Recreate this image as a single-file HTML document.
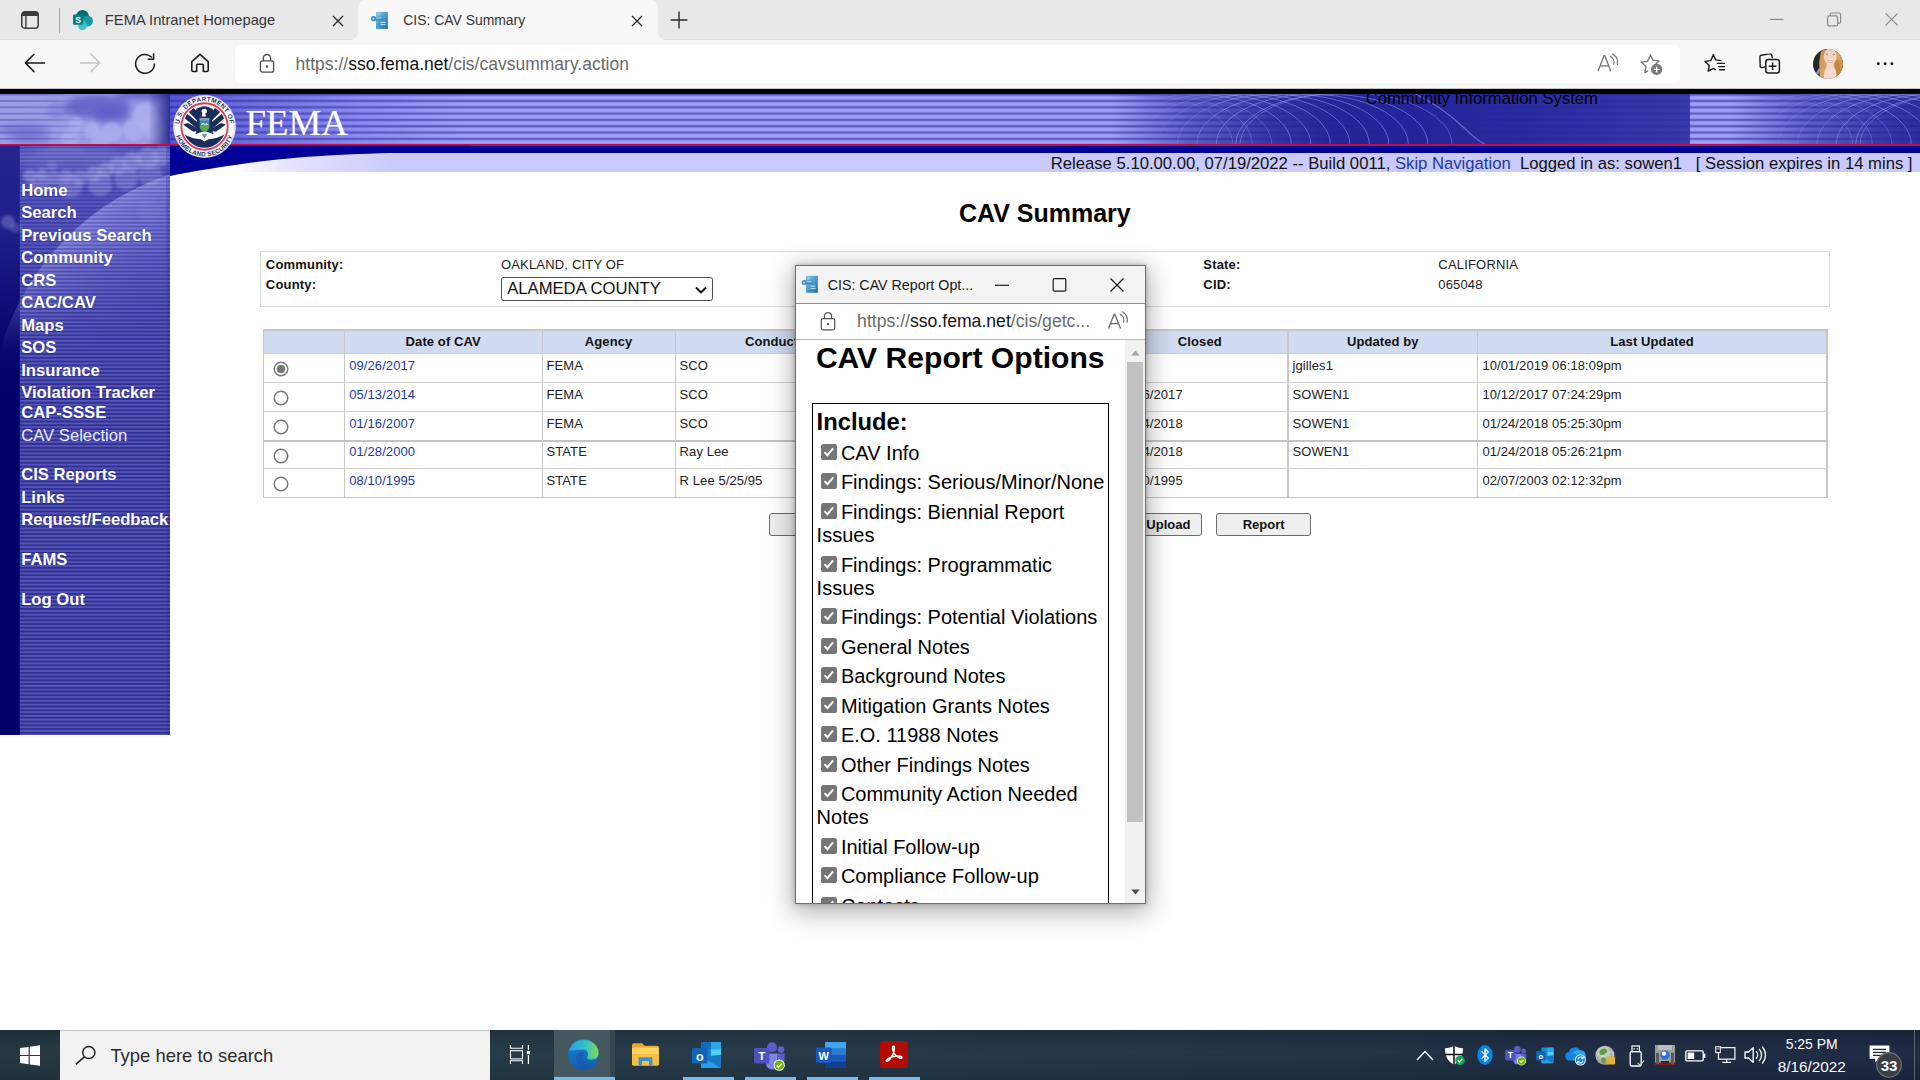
<!DOCTYPE html>
<html lang="en">
<head>
<meta charset="utf-8">
<title>CIS: CAV Summary</title>
<style>
*{box-sizing:border-box;margin:0;padding:0}
html,body{width:1920px;height:1080px;overflow:hidden;background:#fff;font-family:"Liberation Sans",sans-serif}
#root{position:absolute;left:0;top:0;width:1920px;height:1080px;overflow:hidden;background:#fff}
.abs{position:absolute}
.t{position:absolute;white-space:nowrap;line-height:1}
svg{position:absolute;overflow:visible}
/* ===== browser chrome ===== */
#tabstrip{left:0;top:0;width:1920px;height:40px;background:#e8e8e8}
#toolbar{left:0;top:40px;width:1920px;height:48px;background:#f7f7f7}
#acttab{left:358px;top:0;width:300px;height:40px;background:#f7f7f7;border-radius:8px 8px 0 0}
#urlpill{left:235px;top:45px;width:1445px;height:38px;background:#fff;border-radius:6px}
.ui{font-family:"Liberation Sans",sans-serif;color:#1b1b1b}
#blackbar{left:0;top:88px;width:1920px;height:6px;background:#000;border-top:1px solid #c6c6c6}
/* ===== FEMA banner ===== */
#banner{left:0;top:94px;width:1920px;height:51px;background:repeating-linear-gradient(180deg,#4848b0 0,#6c6ccd .8px,#a0a0fa 1.7px,#a0a0fa 4.6px,#6c6ccd 5.5px,#4848b0 6.32px);background-position:0 .64px}
#redline{left:0;top:144px;width:1920px;height:1.8px;background:linear-gradient(180deg,#c8104c 0,#c4104e 60%,#5a0878 100%)}
#navyband{left:170px;top:145.7px;width:1750px;height:7.1px;background:#000099}
#lightband{left:170px;top:152.8px;width:1750px;height:18.8px;background:#c9c9fb}
/* ===== left nav ===== */
.cb{width:15.6px;height:15.6px;background:#767676;border-radius:2.6px}
/* ===== taskbar ===== */
#taskbar{left:0;top:1030px;width:1920px;height:50px;background:linear-gradient(180deg,rgba(0,0,0,.1) 0,rgba(255,255,255,.02) 45%,rgba(0,0,0,.08) 100%),linear-gradient(90deg,#22353f 0,#243846 35%,#213245 62%,#1d2b42 82%,#1b2841 100%)}
#tsearch{left:60px;top:1030px;width:430px;height:50px;background:#f2f2f2;border-top:1px solid #c4c4c4}
</style>
</head>
<body>
<div id="root">
<!-- ================= BROWSER CHROME ================= -->
<div id="tabstrip" class="abs"></div>
<div id="toolbar" class="abs"></div>
<div id="acttab" class="abs"></div>
<div id="urlpill" class="abs"></div>
<div id="blackbar" class="abs"></div>
<div class="abs" style="left:0px;top:39px;width:358px;height:1px;background:#dedede;"></div>
<div class="abs" style="left:658px;top:39px;width:1262px;height:1px;background:#dedede;"></div>
<svg style="left:350px;top:32px" width="8" height="8" viewBox="0 0 8 8"><path d="M8 0V8H0A8 8 0 0 0 8 0z" fill="#f7f7f7"/></svg>
<svg style="left:658px;top:32px" width="8" height="8" viewBox="0 0 8 8"><path d="M0 0V8H8A8 8 0 0 1 0 0z" fill="#f7f7f7"/></svg>
<svg style="left:20px;top:10px" width="20" height="20" viewBox="0 0 20 20"><rect x="1.8" y="1.8" width="16.4" height="16.4" rx="3" fill="none" stroke="#3b3b3b" stroke-width="1.5"/><path d="M1.8 4.6a2.8 2.8 0 0 1 2.8-2.8h10.8a2.8 2.8 0 0 1 2.8 2.8v1.5H1.8z" fill="#3b3b3b"/><path d="M5.9 5v13" stroke="#3b3b3b" stroke-width="1.4"/></svg>
<div class="abs" style="left:59px;top:8px;width:1px;height:25px;background:#a9a9a9;"></div>
<svg style="left:72px;top:9px" width="22" height="22" viewBox="0 0 22 22"><circle cx="10.5" cy="7.2" r="6.3" fill="#036c70"/><circle cx="15.6" cy="12" r="5.4" fill="#1a9ba1"/><circle cx="10.6" cy="16.6" r="4.5" fill="#37c6d0"/><rect x="1" y="5.6" width="10.2" height="10.2" rx="1" fill="#038387"/><text x="6.1" y="13.9" font-family="Liberation Sans,sans-serif" font-weight="bold" font-size="8.6" fill="#fff" text-anchor="middle">S</text></svg>
<div class="t ui" style="top:13px;font-size:14.74px;left:104.86px;color:#363636;">FEMA Intranet Homepage</div>
<svg style="left:331px;top:14px" width="14" height="14" viewBox="0 0 14 14"><path d="M2 2l10 10M12 2L2 12" stroke="#2a2a2a" stroke-width="1.3"/></svg>
<svg style="left:371px;top:11px" width="18" height="18" viewBox="0 0 18 18"><defs><linearGradient id="pgX" x1="0" y1="0" x2="1" y2="1"><stop offset="0" stop-color="#8ccdea"/><stop offset=".5" stop-color="#4a9cc8"/><stop offset="1" stop-color="#1a6ea0"/></linearGradient></defs><path d="M5 .9h11.900v17H5z" fill="url(#pgX)"/><path d="M2.600 5.900h9.400v3.600H2.600z" fill="#3a8fc0"/><circle cx="2.600" cy="7.700" r="2.600" fill="#3a8fc0"/><circle cx="2.500" cy="7.700" r="1" fill="#bfe6f7"/><path d="M5 7h5.500M9.600 11.400h5M9.600 13.600h5M7.600 3.800l1-1.200" stroke="#d4edf9" stroke-width=".9"/></svg>
<div class="t ui" style="top:14px;font-size:13.91px;left:403.30px;color:#363636;">CIS: CAV Summary</div>
<svg style="left:630px;top:14px" width="14" height="14" viewBox="0 0 14 14"><path d="M2 2l10 10M12 2L2 12" stroke="#2a2a2a" stroke-width="1.3"/></svg>
<svg style="left:670px;top:11px" width="18" height="18" viewBox="0 0 18 18"><path d="M9 .6v16.8M.6 9h16.8" stroke="#2a2a2a" stroke-width="1.4"/></svg>
<svg style="left:1765px;top:8px" width="140" height="24" viewBox="0 0 140 24"><path d="M5 11.4h13.5" stroke="#8a8a8a" stroke-width="1.2"/><rect x="62.6" y="7.8" width="10" height="10" rx="1.6" fill="none" stroke="#8a8a8a" stroke-width="1.2"/><path d="M65.2 7.6V6.4a1.4 1.4 0 0 1 1.4-1.4h7.2a1.8 1.8 0 0 1 1.8 1.8v7a1.4 1.4 0 0 1-1.4 1.4h-1.4" fill="none" stroke="#8a8a8a" stroke-width="1.2"/><path d="M120.6 5.4l12 12M132.6 5.4l-12 12" stroke="#8a8a8a" stroke-width="1.2"/></svg>
<svg style="left:24px;top:53px" width="22" height="20" viewBox="0 0 22 20"><path d="M20.6 9.9H1.8M10 1.2L1.4 9.9l8.6 8.7" fill="none" stroke="#1b1b1b" stroke-width="1.5" stroke-linejoin="round" stroke-linecap="round"/></svg>
<svg style="left:79px;top:53px" width="22" height="20" viewBox="0 0 22 20"><path d="M1.4 9.9h18.8M12 1.2l8.6 8.7-8.6 8.7" fill="none" stroke="#c6c6c6" stroke-width="1.5" stroke-linejoin="round" stroke-linecap="round"/></svg>
<svg style="left:133px;top:52px" width="24" height="24" viewBox="0 0 24 24"><path d="M21.4 11.9a9.4 9.4 0 1 1-3-6.9" fill="none" stroke="#1b1b1b" stroke-width="1.5" stroke-linecap="round"/><path d="M20.6 1.8v5.4h-5.4" fill="none" stroke="#1b1b1b" stroke-width="1.5" stroke-linecap="round" stroke-linejoin="round"/></svg>
<svg style="left:190px;top:53px" width="20" height="20" viewBox="0 0 20 20"><path d="M1.8 8.6L10 1.4l8.2 7.2v8.6a1.3 1.3 0 0 1-1.3 1.3h-3.6v-6.3a1 1 0 0 0-1-1H7.7a1 1 0 0 0-1 1v6.3H3.1a1.3 1.3 0 0 1-1.3-1.3z" fill="none" stroke="#1b1b1b" stroke-width="1.6" stroke-linejoin="round"/></svg>
<svg style="left:258px;top:52px" width="18" height="22" viewBox="0 0 18 22"><rect x="2.4" y="8.8" width="13.2" height="11.4" rx="2" fill="none" stroke="#4a4a4a" stroke-width="1.3"/><path d="M5.4 8.6V6.1a3.6 3.6 0 0 1 7.2 0v2.5" fill="none" stroke="#4a4a4a" stroke-width="1.3"/><circle cx="9" cy="14.5" r="1.2" fill="#4a4a4a"/></svg>
<div class="t ui" style="top:56px;font-size:17.51px;left:295.62px;color:#666;"><span style="color:#6a6a6a">https://</span><span style="color:#111">sso.fema.net</span><span style="color:#6a6a6a">/cis/cavsummary.action</span></div>
<svg style="left:1596px;top:52px" width="24" height="22" viewBox="0 0 24 22"><path d="M2 19.2L8 3.6h.8l6 15.6M4.3 13.8h8.2" fill="none" stroke="#767676" stroke-width="1.35"/><path d="M14.400 4.600a6.600 6.600 0 0 1 3.400 7.800M16.800 2a10.400 10.400 0 0 1 4.600 10.400" fill="none" stroke="#767676" stroke-width="1.2" stroke-linecap="round"/></svg>
<svg style="left:1640px;top:53px" width="24" height="24" viewBox="0 0 24 24"><path d="M10.2 1.6l2.7 5.6 6.1.8-4.4 4.3M7.6 18.2l-2.7 1.5 1-6.1-4.5-4.4 6.1-.9 2.7-5.5" fill="none" stroke="#767676" stroke-width="1.35" stroke-linejoin="round" stroke-linecap="round"/><circle cx="16.6" cy="16.4" r="5.6" fill="#767676"/><path d="M16.6 13.4v6M13.6 16.4h6" stroke="#fff" stroke-width="1.4"/></svg>
<svg style="left:1704px;top:53px" width="22" height="22" viewBox="0 0 22 22"><path d="M9.2 1.6l2.5 5.3 5.2.7M11.4 16.6L9.2 15.4l-5 2.7 1-5.7L1 8.4l5.7-.8 2.5-5.2" fill="none" stroke="#1b1b1b" stroke-width="1.45" stroke-linejoin="round" stroke-linecap="round"/><path d="M13.4 10.4h7M14.6 13.6h5.8M15.6 16.8h4.8" stroke="#1b1b1b" stroke-width="1.4" stroke-linecap="round"/></svg>
<svg style="left:1759px;top:53px" width="22" height="22" viewBox="0 0 22 22"><path d="M6 13.8L3.2 14.6a1.6 1.6 0 0 1-2-1.1L.9 4.4a1.8 1.8 0 0 1 1.3-2.2l8.6-1.3a1.8 1.8 0 0 1 2.1 1.3l.5 3" fill="none" stroke="#1b1b1b" stroke-width="1.4" stroke-linejoin="round"/><rect x="6.8" y="6.4" width="13.6" height="13.6" rx="2.4" fill="none" stroke="#1b1b1b" stroke-width="1.5"/><path d="M13.6 9.4v7.6M9.8 13.2h7.6" stroke="#1b1b1b" stroke-width="1.5"/></svg>
<svg style="left:1813px;top:48.8px" width="30" height="30" viewBox="0 0 30 30"><defs><clipPath id="avc"><circle cx="15" cy="15" r="15"/></clipPath><filter id="avb" x="-10%" y="-10%" width="120%" height="120%"><feGaussianBlur stdDeviation=".55"/></filter><linearGradient id="avh" x1="0" y1="0" x2="1" y2="1"><stop offset="0" stop-color="#c98c4c"/><stop offset=".5" stop-color="#dda766"/><stop offset="1" stop-color="#b97a38"/></linearGradient></defs><g clip-path="url(#avc)"><rect width="30" height="30" fill="#1e2a2c"/><g filter="url(#avb)"><path d="M3 24l3-5 2 1-3 6z" fill="#8d97a0"/><path d="M8.500 2C11 -1 24 -1 27 4c3 4 4 12 3 18s-4 9-8 9H9c-2-2-3-6-2.500-9C7 18 5.500 15 6.500 11S7 4 8.500 2z" fill="url(#avh)"/><path d="M24 10c2 2 4 6 3 10s-3 6-5 8c1-4 1-8 0-11s1-5 2-7z" fill="#c8863a"/><ellipse cx="17.200" cy="7.600" rx="6.400" ry="8" fill="#f3d3bf"/><path d="M13.800 13.500h6.600l.4 4.500c2 2 3 6 2.500 12H11c-.5-5 .5-9 2.500-12z" fill="#f6dbcd"/><ellipse cx="17.100" cy="12.500" rx="2.800" ry="1.150" fill="#e3a0a0"/><ellipse cx="17.100" cy="12.200" rx="2" ry=".55" fill="#fff"/><ellipse cx="13.800" cy="5.300" rx="1.300" ry=".6" fill="#8f8a9a"/><ellipse cx="20.800" cy="5.300" rx="1.300" ry=".6" fill="#8f8a9a"/></g></g></svg>
<svg style="left:1874px;top:60px" width="24" height="8" viewBox="0 0 24 8"><circle cx="4.3" cy="3.8" r="1.45" fill="#1b1b1b"/><circle cx="11.1" cy="3.8" r="1.45" fill="#1b1b1b"/><circle cx="17.9" cy="3.8" r="1.45" fill="#1b1b1b"/></svg>


<!-- ================= BANNER ================= -->
<div id="banner" class="abs"></div>
<div class="abs" style="left:170px;top:94px;width:300px;height:51px;background:linear-gradient(90deg,rgba(40,40,180,.62) 0,rgba(50,50,190,.42) 90px,rgba(60,60,200,.2) 190px,rgba(70,70,210,0) 300px);"></div>
<div class="abs" style="left:1070px;top:94px;width:620px;height:51px;background:linear-gradient(90deg,rgba(38,38,156,0) 0,rgba(38,38,156,0) 40px,rgba(38,38,156,.55) 120px,rgba(36,36,154,.86) 200px,rgba(34,34,152,.97) 260px,rgba(36,36,154,1) 330px,rgba(38,38,156,.97) 440px,rgba(46,46,164,.9) 620px);"></div>
<svg style="left:1070px;top:94px" width="620" height="51" viewBox="0 0 620 51"><defs><linearGradient id="af1070" x1="0" y1="0" x2="1" y2="0"><stop offset="0" stop-color="#b9b9ff" stop-opacity=".15"/><stop offset=".12" stop-color="#b9b9ff" stop-opacity=".55"/><stop offset=".55" stop-color="#a9a9f6" stop-opacity=".5"/><stop offset="1" stop-color="#9a9aee" stop-opacity=".35"/></linearGradient><clipPath id="ac1070"><rect x="0" y="0" width="620" height="50.500"/></clipPath><linearGradient id="am1070" gradientUnits="userSpaceOnUse" x1="0" y1="0" x2="620" y2="0"><stop offset="0" stop-color="#000"/><stop offset=".1" stop-color="#000"/><stop offset=".26" stop-color="#fff"/><stop offset="1" stop-color="#fff"/></linearGradient><mask id="ak1070" maskUnits="userSpaceOnUse" x="0" y="0" width="620" height="51"><rect width="620" height="51" fill="url(#am1070)"/></mask></defs><g clip-path="url(#ac1070)" mask="url(#ak1070)" fill="none" stroke="#a4a4f6" stroke-width="1"><ellipse cx="261.8" cy="50.5" rx="96" ry="50" opacity="0.5"/><ellipse cx="242.3" cy="50.5" rx="96" ry="50" opacity="0.5"/><ellipse cx="222.8" cy="50.5" rx="96" ry="50" opacity="0.5"/><ellipse cx="203.3" cy="50.5" rx="96" ry="50" opacity="0.5"/><ellipse cx="183.8" cy="50.5" rx="96" ry="50" opacity="0.5"/><ellipse cx="164.3" cy="50.5" rx="96" ry="50" opacity="0.5"/><ellipse cx="144.8" cy="50.5" rx="96" ry="50" opacity="0.5"/><ellipse cx="125.3" cy="50.5" rx="96" ry="50" opacity="0.5"/><ellipse cx="105.8" cy="50.5" rx="96" ry="50" opacity="0.3"/><ellipse cx="86.3" cy="50.5" rx="96" ry="50" opacity="0.3"/><ellipse cx="66.8" cy="50.5" rx="96" ry="50" opacity="0.3"/><ellipse cx="276" cy="50.500" rx="106" ry="52" opacity=".4"/><path d="M345 0Q372 13 392 32T418 51" opacity=".5" stroke-width="1.300"/></g></svg>
<div class="abs" style="left:1690px;top:94px;width:230px;height:51px;overflow:hidden"><div class="abs" style="left:-1690px;top:-94px;width:1920px;height:200px"><div class="abs" style="left:1690px;top:94px;width:230px;height:51px;background:repeating-linear-gradient(180deg,#4848b0 0,#6c6ccd .8px,#a0a0fa 1.700px,#a0a0fa 4.600px,#6c6ccd 5.500px,#4848b0 6.320px);background-position:0 .64px;"></div>
<div class="abs" style="left:1690px;top:94px;width:620px;height:51px;background:linear-gradient(90deg,rgba(38,38,156,0) 0,rgba(38,38,156,0) 40px,rgba(38,38,156,.55) 120px,rgba(36,36,154,.86) 200px,rgba(34,34,152,.97) 260px,rgba(36,36,154,1) 330px,rgba(38,38,156,.97) 440px,rgba(46,46,164,.9) 620px);"></div>
<svg style="left:1690px;top:94px" width="620" height="51" viewBox="0 0 620 51"><defs><linearGradient id="af1690" x1="0" y1="0" x2="1" y2="0"><stop offset="0" stop-color="#b9b9ff" stop-opacity=".15"/><stop offset=".12" stop-color="#b9b9ff" stop-opacity=".55"/><stop offset=".55" stop-color="#a9a9f6" stop-opacity=".5"/><stop offset="1" stop-color="#9a9aee" stop-opacity=".35"/></linearGradient><clipPath id="ac1690"><rect x="0" y="0" width="620" height="50.500"/></clipPath><linearGradient id="am1690" gradientUnits="userSpaceOnUse" x1="0" y1="0" x2="620" y2="0"><stop offset="0" stop-color="#000"/><stop offset=".1" stop-color="#000"/><stop offset=".26" stop-color="#fff"/><stop offset="1" stop-color="#fff"/></linearGradient><mask id="ak1690" maskUnits="userSpaceOnUse" x="0" y="0" width="620" height="51"><rect width="620" height="51" fill="url(#am1690)"/></mask></defs><g clip-path="url(#ac1690)" mask="url(#ak1690)" fill="none" stroke="#a4a4f6" stroke-width="1"><ellipse cx="261.8" cy="50.5" rx="96" ry="50" opacity="0.5"/><ellipse cx="242.3" cy="50.5" rx="96" ry="50" opacity="0.5"/><ellipse cx="222.8" cy="50.5" rx="96" ry="50" opacity="0.5"/><ellipse cx="203.3" cy="50.5" rx="96" ry="50" opacity="0.5"/><ellipse cx="183.8" cy="50.5" rx="96" ry="50" opacity="0.5"/><ellipse cx="164.3" cy="50.5" rx="96" ry="50" opacity="0.5"/><ellipse cx="144.8" cy="50.5" rx="96" ry="50" opacity="0.5"/><ellipse cx="125.3" cy="50.5" rx="96" ry="50" opacity="0.5"/><ellipse cx="105.8" cy="50.5" rx="96" ry="50" opacity="0.3"/><ellipse cx="86.3" cy="50.5" rx="96" ry="50" opacity="0.3"/><ellipse cx="66.8" cy="50.5" rx="96" ry="50" opacity="0.3"/><ellipse cx="276" cy="50.500" rx="106" ry="52" opacity=".4"/><path d="M345 0Q372 13 392 32T418 51" opacity=".5" stroke-width="1.300"/></g></svg>
</div></div>

<svg style="left:0px;top:94px" width="170" height="641" viewBox="0 0 170 641"><defs><linearGradient id="nvb" gradientUnits="userSpaceOnUse" x1="0" y1="51" x2="0" y2="641"><stop offset="0" stop-color="#5454c2"/><stop offset=".12" stop-color="#5050bc"/><stop offset=".3" stop-color="#4b4bb5"/><stop offset=".5" stop-color="#4949b1"/><stop offset="1" stop-color="#4949b1"/></linearGradient><filter id="nvbl" x="-20%" y="-20%" width="140%" height="140%"><feGaussianBlur stdDeviation="1.500"/></filter><filter id="nvbl3" x="-20%" y="-20%" width="140%" height="140%"><feGaussianBlur stdDeviation="3.500"/></filter><radialGradient id="nvg" gradientUnits="userSpaceOnUse" cx="250" cy="328" r="260"><stop offset="0" stop-color="#a0a0f4" stop-opacity="0"/><stop offset=".5" stop-color="#a0a0f4" stop-opacity="0"/><stop offset=".78" stop-color="#a0a0f4" stop-opacity=".3"/><stop offset=".93" stop-color="#a6a6f6" stop-opacity=".48"/><stop offset="1" stop-color="#b4b4fc" stop-opacity=".58"/></radialGradient><linearGradient id="nvmg" gradientUnits="userSpaceOnUse" x1="0" y1="0" x2="0" y2="641"><stop offset="0" stop-color="#fff"/><stop offset=".23" stop-color="#fff"/><stop offset=".4" stop-color="#000"/><stop offset="1" stop-color="#000"/></linearGradient><mask id="nvm" maskUnits="userSpaceOnUse" x="0" y="0" width="170" height="641"><rect width="170" height="641" fill="url(#nvmg)"/></mask><linearGradient id="nvs" gradientUnits="userSpaceOnUse" x1="0" y1="51" x2="0" y2="641"><stop offset="0" stop-color="#23238c"/><stop offset=".14" stop-color="#1e1e88"/><stop offset=".3" stop-color="#08086e"/><stop offset=".42" stop-color="#000066"/><stop offset="1" stop-color="#000066"/></linearGradient><pattern id="nvp" width="170" height="3.750" patternUnits="userSpaceOnUse" y="51"><rect width="170" height="2" y="1.750" fill="#10106a" fill-opacity=".42"/><rect width="170" height="1.300" y=".25" fill="#c0c0ff" fill-opacity=".15"/></pattern><pattern id="nvp2" width="170" height="6.320" patternUnits="userSpaceOnUse" y=".64"><rect width="170" height="1.700" y="-.85" fill="#4a4ab2" fill-opacity=".55"/><rect width="170" height="1.700" y="5.470" fill="#4a4ab2" fill-opacity=".55"/></pattern><linearGradient id="nvf" x1="0" y1="0" x2="1" y2="0"><stop offset="0" stop-color="#fff"/><stop offset=".28" stop-color="#fff" stop-opacity=".8"/><stop offset=".55" stop-color="#fff" stop-opacity="0"/></linearGradient><mask id="nvm2" maskUnits="userSpaceOnUse" x="0" y="0" width="170" height="51"><rect width="170" height="51" fill="url(#nvf)"/></mask><linearGradient id="nvr" x1="0" y1="0" x2="1" y2="0"><stop offset="0" stop-color="#26268a" stop-opacity="0"/><stop offset="1" stop-color="#26268a" stop-opacity=".92"/></linearGradient><linearGradient id="nvsg" gradientUnits="userSpaceOnUse" x1="0" y1="51" x2="0" y2="641"><stop offset="0" stop-color="#fff" stop-opacity=".5"/><stop offset=".2" stop-color="#fff" stop-opacity=".7"/><stop offset=".4" stop-color="#fff" stop-opacity="1"/><stop offset="1" stop-color="#fff" stop-opacity="1"/></linearGradient><mask id="nvsm" maskUnits="userSpaceOnUse" x="0" y="51" width="170" height="590"><rect y="51" width="170" height="590" fill="url(#nvsg)"/></mask><clipPath id="nvc"><rect width="170" height="641"/></clipPath><clipPath id="nvct"><rect width="170" height="50.500"/></clipPath><clipPath id="nvcb"><rect y="50.500" width="170" height="591"/></clipPath></defs><g clip-path="url(#nvc)"><g clip-path="url(#nvct)"><rect width="170" height="51" fill="#9c9ce6"/><g filter="url(#nvbl3)" fill="#5656c2"><ellipse cx="98" cy="13" rx="33" ry="12" opacity=".75"/><ellipse cx="112" cy="22" rx="18" ry="8" opacity=".6"/><ellipse cx="146" cy="0" rx="30" ry="5" opacity=".9"/><ellipse cx="24" cy="36" rx="26" ry="5" opacity=".55"/><ellipse cx="30" cy="45" rx="22" ry="3.500" opacity=".55"/><ellipse cx="58" cy="16" rx="12" ry="8" opacity=".3"/></g><g filter="url(#nvbl)" fill="#b0b0ee"><circle cx="146" cy="22" r="13" opacity=".8"/><circle cx="154" cy="34" r="12" opacity=".7"/><circle cx="134" cy="36" r="11" opacity=".7"/><circle cx="112" cy="38" r="10" opacity=".7"/><circle cx="92" cy="36" r="8" opacity=".7"/><circle cx="76" cy="30" r="7" opacity=".6"/><circle cx="100" cy="46" r="9" opacity=".6"/><circle cx="70" cy="44" r="9" opacity=".55"/></g><rect width="170" height="51" fill="url(#nvp2)" mask="url(#nvm2)"/><rect x="148" y="0" width="22" height="51" fill="url(#nvr)"/></g><g clip-path="url(#nvcb)"><rect y="51" width="170" height="590" fill="url(#nvb)"/><g filter="url(#nvbl3)" fill="#8484d8"><ellipse cx="70" cy="64" rx="56" ry="12" opacity=".4"/><ellipse cx="60" cy="58" rx="26" ry="5" opacity=".5"/><ellipse cx="110" cy="62" rx="30" ry="5" opacity=".4"/><ellipse cx="150" cy="66" rx="20" ry="6" opacity=".5"/></g><g filter="url(#nvbl)" fill="#a6a6ea"><circle cx="30" cy="82" r="7" opacity="0.6"/><circle cx="42" cy="80" r="6" opacity="0.6"/><circle cx="54" cy="84" r="7" opacity="0.55"/><circle cx="66" cy="82" r="7" opacity="0.55"/><circle cx="80" cy="84" r="8" opacity="0.55"/><circle cx="94" cy="80" r="8" opacity="0.6"/><circle cx="106" cy="76" r="8" opacity="0.6"/><circle cx="118" cy="72" r="9" opacity="0.6"/><circle cx="132" cy="68" r="10" opacity="0.6"/><circle cx="148" cy="64" r="11" opacity="0.55"/><circle cx="162" cy="62" r="10" opacity="0.5"/><circle cx="40" cy="90" r="10" opacity="0.45"/><circle cx="70" cy="92" r="12" opacity="0.45"/><circle cx="100" cy="90" r="12" opacity="0.45"/><circle cx="126" cy="84" r="12" opacity="0.45"/><circle cx="150" cy="80" r="12" opacity="0.4"/><circle cx="52" cy="72" r="5" opacity="0.35"/><circle cx="8" cy="128" r="8" opacity="0.5"/><circle cx="16" cy="134" r="6" opacity="0.4"/><circle cx="150" cy="116" r="12" opacity="0.14"/></g><rect x="0" y="51" width="19.800" height="590" fill="url(#nvs)" opacity=".97"/><g filter="url(#nvbl)" fill="#8888d8"><circle cx="8" cy="128" r="7" opacity=".45"/><circle cx="15" cy="134" r="5" opacity=".35"/></g><g mask="url(#nvm)"><circle cx="250" cy="328" r="260" fill="url(#nvg)"/></g><rect x="19.800" y="51" width="151" height="590" fill="url(#nvp)" mask="url(#nvsm)"/><rect x="166" y="51" width="4" height="590" fill="#2c2c9a" opacity=".25"/></g></g></svg>

<div id="navyband" class="abs"></div>
<div id="lightband" class="abs"></div>
<div id="redline" class="abs"></div>
<div class="abs" style="left:170px;top:152.8px;width:260px;height:18.8px;background:linear-gradient(90deg,#fff 0,#fff 60px,#e4e4fd 120px,#c9c9fb 230px);"></div>
<svg style="left:170px;top:145px" width="300" height="32" viewBox="0 0 300 32"><path d="M0 .7H300V7.800H240C180 8.400 120 12 75 18.500S15 28 0 31z" fill="#000099"/></svg>
<svg style="left:172.8px;top:95.2px" width="63" height="63" viewBox="0 0 63 63"><defs><path id="sealtop" d="M31.500 31.500m-25.300 0a25.300 25.300 0 0 1 50.600 0"/><path id="sealbot" d="M31.500 31.500m-29.900 0a29.900 29.900 0 0 0 59.800 0"/><radialGradient id="sg" cx=".5" cy=".5" r=".5"><stop offset=".9" stop-color="#fff"/><stop offset="1" stop-color="#d4d4e4"/></radialGradient><clipPath id="sealin"><circle cx="31.500" cy="31.500" r="21.300"/></clipPath></defs><circle cx="31.500" cy="31.500" r="31.400" fill="url(#sg)"/><circle cx="31.500" cy="31.500" r="23.200" fill="#fff" stroke="#de3c54" stroke-width="1.900"/><g clip-path="url(#sealin)"><path d="M8 37c6 5 14 7.500 23.500 7.500s17.500-2.500 23.500-7.500v20H8z" fill="#1a2e5e"/><path d="M10.500 11.500L18.500 10.500L28.500 21.500L25 26.500Z" fill="#1a2e5e"/><path d="M 52.5 11.500 L 44.5 10.500 L 34.5 21.500 L 38.0 26.500 Z" fill="#1a2e5e"/><path d="M8.500 20.500L14.500 19L26 28.500L23.500 33.500Z" fill="#1a2e5e"/><path d="M 54.5 20.500 L 48.5 19 L 37.0 28.500 L 39.5 33.500 Z" fill="#1a2e5e"/><path d="M10 29.500L15 28L26 34.500L24 39.500Z" fill="#1a2e5e"/><path d="M 53.0 29.500 L 48.0 28 L 37.0 34.500 L 39.0 39.500 Z" fill="#1a2e5e"/><path d="M22.500 15Q31.500 7.500 40.500 15L39.500 24.500H23.500Z" fill="#1a2e5e"/><path d="M24 24h15v14l-7.500 5-7.500-5z" fill="#1a2e5e"/></g><path d="M29.300 14.600c1.600-1.400 4-1 4.600.8.400 1.400-.4 2.800-1.800 3.200l1.200 2.800h-4.600l.6-3.400c-1-.8-1-2.400 0-3.400z" fill="#fff"/><path d="M26.600 23h9.800v8.400c0 2.800-2 5-4.900 6-2.900-1-4.900-3.200-4.900-6z" fill="#3a86b0"/><path d="M26.600 23h9.800v2.600h-9.800z" fill="#8a9ab8"/><path d="M27 31.400c1.600-2 7.400-2 9 0-.6 2.800-2.200 4.600-4.500 5.400-2.300-.8-3.900-2.600-4.500-5.400z" fill="#58b03c"/><path d="M27.400 30.200c1.800-2.600 3.600-3.200 4.600-1.200 1-1 2.800-.6 4 1.400-2.400-1-6-1-8.600-.2z" fill="#fff"/><path d="M24.600 38.600c2-1.200 4.400-1.800 6.900-1.800s4.900.6 6.900 1.800c-.6 3.600-3 6.600-6.900 7.800-3.900-1.200-6.300-4.200-6.900-7.800z" fill="#fff"/><path d="M28.600 38.800l2.900 5 2.900-5z" fill="#1a2e5e" opacity=".55"/><path d="M20.800 41.400l4.400-2.200M42.200 41.400l-4.400-2.200M19.200 37.600l3.600-.6M43.800 37.600l-3.600-.6" stroke="#fff" stroke-width="1.300" stroke-linecap="round"/><text font-family="Liberation Sans,sans-serif" font-weight="bold" font-size="6.300" fill="#1a2e5e" letter-spacing=".35"><textPath href="#sealtop" startOffset="50%" text-anchor="middle">U.S. DEPARTMENT OF</textPath></text><text font-family="Liberation Sans,sans-serif" font-weight="bold" font-size="6.300" fill="#1a2e5e" letter-spacing=".25"><textPath href="#sealbot" startOffset="50%" text-anchor="middle">HOMELAND SECURITY</textPath></text></svg>
<div class="t" style="top:105px;font-size:36.85px;left:245.56px;color:#fff;font-family:&quot;Liberation Serif&quot;,serif;text-shadow:0 0 1px rgba(255,255,255,.5);">FEMA</div>

<!-- ================= FEMA PAGE CONTENT ================= -->
<div class="t" style="top:156px;font-size:16.67px;right:7.50px;color:#111;">Release 5.10.00.00, 07/19/2022 -- Build 0011, <span style="color:#1c3c9c">Skip Navigation</span>&nbsp; Logged in as: sowen1 &nbsp; [ Session expires in 14 mins ]</div>
<div class="t" style="top:91px;font-size:16.67px;left:1365.67px;color:#000;">Community Information System</div>
<div class="t" style="top:183px;font-size:16.67px;left:21.17px;color:#fff;font-weight:bold;text-shadow:0 0 1px rgba(20,20,90,.6);">Home</div>
<div class="t" style="top:205px;font-size:16.67px;left:21.17px;color:#fff;font-weight:bold;text-shadow:0 0 1px rgba(20,20,90,.6);">Search</div>
<div class="t" style="top:228px;font-size:16.67px;left:21.17px;color:#fff;font-weight:bold;text-shadow:0 0 1px rgba(20,20,90,.6);">Previous Search</div>
<div class="t" style="top:250px;font-size:16.67px;left:21.17px;color:#fff;font-weight:bold;text-shadow:0 0 1px rgba(20,20,90,.6);">Community</div>
<div class="t" style="top:273px;font-size:16.67px;left:21.17px;color:#fff;font-weight:bold;text-shadow:0 0 1px rgba(20,20,90,.6);">CRS</div>
<div class="t" style="top:295px;font-size:16.67px;left:21.17px;color:#fff;font-weight:bold;text-shadow:0 0 1px rgba(20,20,90,.6);">CAC/CAV</div>
<div class="t" style="top:318px;font-size:16.67px;left:21.17px;color:#fff;font-weight:bold;text-shadow:0 0 1px rgba(20,20,90,.6);">Maps</div>
<div class="t" style="top:340px;font-size:16.67px;left:21.17px;color:#fff;font-weight:bold;text-shadow:0 0 1px rgba(20,20,90,.6);">SOS</div>
<div class="t" style="top:363px;font-size:16.67px;left:21.17px;color:#fff;font-weight:bold;text-shadow:0 0 1px rgba(20,20,90,.6);">Insurance</div>
<div class="t" style="top:385px;font-size:16.67px;left:21.17px;color:#fff;font-weight:bold;text-shadow:0 0 1px rgba(20,20,90,.6);">Violation Tracker</div>
<div class="t" style="top:405px;font-size:16.67px;left:21.17px;color:#fff;font-weight:bold;text-shadow:0 0 1px rgba(20,20,90,.6);">CAP-SSSE</div>
<div class="t" style="top:428px;font-size:16.67px;left:21.17px;color:#e9e9ff;">CAV Selection</div>
<div class="t" style="top:467px;font-size:16.67px;left:21.17px;color:#fff;font-weight:bold;text-shadow:0 0 1px rgba(20,20,90,.6);">CIS Reports</div>
<div class="t" style="top:490px;font-size:16.67px;left:21.17px;color:#fff;font-weight:bold;text-shadow:0 0 1px rgba(20,20,90,.6);">Links</div>
<div class="t" style="top:512px;font-size:16.67px;left:21.17px;color:#fff;font-weight:bold;text-shadow:0 0 1px rgba(20,20,90,.6);">Request/Feedback</div>
<div class="t" style="top:552px;font-size:16.67px;left:21.17px;color:#fff;font-weight:bold;text-shadow:0 0 1px rgba(20,20,90,.6);">FAMS</div>
<div class="t" style="top:592px;font-size:16.67px;left:21.17px;color:#fff;font-weight:bold;text-shadow:0 0 1px rgba(20,20,90,.6);">Log Out</div>
<div class="t" style="top:201px;font-size:25px;left:544.80px;width:1000px;text-align:center;color:#000;font-weight:bold;">CAV Summary</div>
<div class="abs" style="left:260px;top:251px;width:1570px;height:56px;border:1px solid #dcdcdc;"></div>
<div class="t" style="top:258px;font-size:13px;left:265.85px;color:#111;font-weight:bold;letter-spacing:.18px;">Community:</div>
<div class="t" style="top:278px;font-size:13px;left:265.85px;color:#111;font-weight:bold;letter-spacing:.18px;">County:</div>
<div class="t" style="top:258px;font-size:13px;left:500.95px;color:#222;letter-spacing:.18px;">OAKLAND, CITY OF</div>
<div class="t" style="top:258px;font-size:13px;left:1203.35px;color:#111;font-weight:bold;letter-spacing:.18px;">State:</div>
<div class="t" style="top:278px;font-size:13px;left:1203.35px;color:#111;font-weight:bold;letter-spacing:.18px;">CID:</div>
<div class="t" style="top:258px;font-size:13px;left:1438.35px;color:#222;letter-spacing:.18px;">CALIFORNIA</div>
<div class="t" style="top:278px;font-size:13px;left:1438.35px;color:#222;letter-spacing:.15px;">065048</div>
<div class="abs" style="left:501px;top:276.7px;width:212px;height:24px;border:1.2px solid #505050;border-radius:2.5px;background:#fff;"></div>
<div class="t" style="top:281px;font-size:16.67px;left:507.17px;color:#111;">ALAMEDA COUNTY</div>
<svg style="left:694px;top:285px" width="14" height="10" viewBox="0 0 14 10"><path d="M2 2.5 L7 7.5 L12 2.5" fill="none" stroke="#111" stroke-width="1.9"/></svg>
<div class="abs" style="left:263px;top:329px;width:1565px;height:169px;background:#fff;"></div>
<div class="abs" style="left:263px;top:329px;width:1565px;height:25px;background:#d0daf0;"></div>
<div class="abs" style="left:263px;top:329px;width:1565px;height:169px;border:solid #c6c6c6;border-width:2px 2px 1.3px 1.5px;"></div>
<div class="abs" style="left:263px;top:353px;width:1565px;height:1.3px;background:#cfcfcf;"></div>
<div class="abs" style="left:263px;top:382px;width:1565px;height:1.3px;background:#cfcfcf;"></div>
<div class="abs" style="left:263px;top:411px;width:1565px;height:1.3px;background:#cfcfcf;"></div>
<div class="abs" style="left:263px;top:439.5px;width:1565px;height:2.3px;background:#c4c4c4;"></div>
<div class="abs" style="left:263px;top:468px;width:1565px;height:1.3px;background:#cfcfcf;"></div>
<div class="abs" style="left:344px;top:329px;width:1.3px;height:169px;background:#c8c8c8;"></div>
<div class="abs" style="left:542px;top:329px;width:1.3px;height:169px;background:#c8c8c8;"></div>
<div class="abs" style="left:675px;top:329px;width:1.3px;height:169px;background:#c8c8c8;"></div>
<div class="abs" style="left:900px;top:329px;width:1.3px;height:169px;background:#c8c8c8;"></div>
<div class="abs" style="left:1112px;top:329px;width:1.3px;height:169px;background:#c8c8c8;"></div>
<div class="abs" style="left:1287px;top:329px;width:2px;height:169px;background:#c8c8c8;"></div>
<div class="abs" style="left:1477px;top:329px;width:1.3px;height:169px;background:#c8c8c8;"></div>
<div class="t" style="top:335px;font-size:13px;left:-56.80px;width:1000px;text-align:center;color:#111;font-weight:bold;letter-spacing:.1px;">Date of CAV</div>
<div class="t" style="top:335px;font-size:13px;left:108.60px;width:1000px;text-align:center;color:#111;font-weight:bold;letter-spacing:.1px;">Agency</div>
<div class="t" style="top:335px;font-size:13px;left:289.60px;width:1000px;text-align:center;color:#111;font-weight:bold;letter-spacing:.1px;">Conducted By</div>
<div class="t" style="top:335px;font-size:13px;left:699.80px;width:1000px;text-align:center;color:#111;font-weight:bold;letter-spacing:.1px;">Closed</div>
<div class="t" style="top:335px;font-size:13px;left:882.80px;width:1000px;text-align:center;color:#111;font-weight:bold;letter-spacing:.1px;">Updated by</div>
<div class="t" style="top:335px;font-size:13px;left:1152.00px;width:1000px;text-align:center;color:#111;font-weight:bold;letter-spacing:.1px;">Last Updated</div>
<div class="t" style="top:359px;font-size:13px;left:349.20px;color:#1d3a9e;letter-spacing:.09px;">09/26/2017</div>
<div class="t" style="top:359px;font-size:13px;left:546.50px;color:#222;letter-spacing:.09px;">FEMA</div>
<div class="t" style="top:359px;font-size:13px;left:679.60px;color:#222;letter-spacing:.09px;">SCO</div>
<div class="t" style="top:359px;font-size:13px;left:1116.80px;color:#222;letter-spacing:.09px;"></div>
<div class="t" style="top:359px;font-size:13px;left:1292.50px;color:#222;letter-spacing:.09px;">jgilles1</div>
<div class="t" style="top:359px;font-size:13px;left:1482.40px;color:#222;letter-spacing:.09px;">10/01/2019 06:18:09pm</div>
<div class="t" style="top:388px;font-size:13px;left:349.20px;color:#1d3a9e;letter-spacing:.09px;">05/13/2014</div>
<div class="t" style="top:388px;font-size:13px;left:546.50px;color:#222;letter-spacing:.09px;">FEMA</div>
<div class="t" style="top:388px;font-size:13px;left:679.60px;color:#222;letter-spacing:.09px;">SCO</div>
<div class="t" style="top:388px;font-size:13px;left:1116.80px;color:#222;letter-spacing:.09px;">10/16/2017</div>
<div class="t" style="top:388px;font-size:13px;left:1292.50px;color:#222;letter-spacing:.09px;">SOWEN1</div>
<div class="t" style="top:388px;font-size:13px;left:1482.40px;color:#222;letter-spacing:.09px;">10/12/2017 07:24:29pm</div>
<div class="t" style="top:417px;font-size:13px;left:349.20px;color:#1d3a9e;letter-spacing:.09px;">01/16/2007</div>
<div class="t" style="top:417px;font-size:13px;left:546.50px;color:#222;letter-spacing:.09px;">FEMA</div>
<div class="t" style="top:417px;font-size:13px;left:679.60px;color:#222;letter-spacing:.09px;">SCO</div>
<div class="t" style="top:417px;font-size:13px;left:1116.80px;color:#222;letter-spacing:.09px;">01/24/2018</div>
<div class="t" style="top:417px;font-size:13px;left:1292.50px;color:#222;letter-spacing:.09px;">SOWEN1</div>
<div class="t" style="top:417px;font-size:13px;left:1482.40px;color:#222;letter-spacing:.09px;">01/24/2018 05:25:30pm</div>
<div class="t" style="top:445px;font-size:13px;left:349.20px;color:#1d3a9e;letter-spacing:.09px;">01/28/2000</div>
<div class="t" style="top:445px;font-size:13px;left:546.50px;color:#222;letter-spacing:.09px;">STATE</div>
<div class="t" style="top:445px;font-size:13px;left:679.60px;color:#222;letter-spacing:.09px;">Ray Lee</div>
<div class="t" style="top:445px;font-size:13px;left:1116.80px;color:#222;letter-spacing:.09px;">01/24/2018</div>
<div class="t" style="top:445px;font-size:13px;left:1292.50px;color:#222;letter-spacing:.09px;">SOWEN1</div>
<div class="t" style="top:445px;font-size:13px;left:1482.40px;color:#222;letter-spacing:.09px;">01/24/2018 05:26:21pm</div>
<div class="t" style="top:474px;font-size:13px;left:349.20px;color:#1d3a9e;letter-spacing:.09px;">08/10/1995</div>
<div class="t" style="top:474px;font-size:13px;left:546.50px;color:#222;letter-spacing:.09px;">STATE</div>
<div class="t" style="top:474px;font-size:13px;left:679.60px;color:#222;letter-spacing:.09px;">R Lee 5/25/95</div>
<div class="t" style="top:474px;font-size:13px;left:1116.80px;color:#222;letter-spacing:.09px;">08/10/1995</div>
<div class="t" style="top:474px;font-size:13px;left:1292.50px;color:#222;letter-spacing:.09px;"></div>
<div class="t" style="top:474px;font-size:13px;left:1482.40px;color:#222;letter-spacing:.09px;">02/07/2003 02:12:32pm</div>
<svg style="left:272.4px;top:360.4px" width="18" height="18" viewBox="0 0 18 18"><circle cx="9" cy="9" r="6.800" fill="#fff" stroke="#767676" stroke-width="1.400"/><circle cx="9" cy="9" r="4.300" fill="#767676"/></svg>
<svg style="left:272.4px;top:389.3px" width="18" height="18" viewBox="0 0 18 18"><circle cx="9" cy="9" r="6.800" fill="#fff" stroke="#767676" stroke-width="1.400"/></svg>
<svg style="left:272.4px;top:418.1px" width="18" height="18" viewBox="0 0 18 18"><circle cx="9" cy="9" r="6.800" fill="#fff" stroke="#767676" stroke-width="1.400"/></svg>
<svg style="left:272.4px;top:446.5px" width="18" height="18" viewBox="0 0 18 18"><circle cx="9" cy="9" r="6.800" fill="#fff" stroke="#767676" stroke-width="1.400"/></svg>
<svg style="left:272.4px;top:475.3px" width="18" height="18" viewBox="0 0 18 18"><circle cx="9" cy="9" r="6.800" fill="#fff" stroke="#767676" stroke-width="1.400"/></svg>
<div class="abs" style="left:768.5px;top:513px;width:120px;height:23px;border:1px solid #6b6b6b;border-radius:3px;background:#efefef;"></div>
<div class="abs" style="left:1080px;top:513px;width:122px;height:23px;border:1px solid #6b6b6b;border-radius:3px;background:#efefef;"></div>
<div class="abs" style="left:1216px;top:513px;width:95px;height:23px;border:1px solid #6b6b6b;border-radius:3px;background:#efefef;"></div>
<div class="t" style="top:518px;font-size:13px;left:1146.35px;color:#111;font-weight:bold;">Upload</div>
<div class="t" style="top:518px;font-size:13px;left:763.70px;width:1000px;text-align:center;color:#111;font-weight:bold;">Report</div>

<!-- ================= POPUP WINDOW ================= -->
<div class="abs" style="left:795px;top:265px;width:351px;height:639px;background:#fff;border:1px solid #6f6f6f;box-shadow:0 6px 24px 3px rgba(0,0,0,.3),0 0 5px rgba(0,0,0,.28);"></div>
<div class="abs" style="left:796px;top:266px;width:349px;height:37px;background:#f3f3f3;"></div>
<div class="abs" style="left:796px;top:303px;width:349px;height:1.2px;background:#8e8e8e;"></div>
<div class="abs" style="left:796px;top:339px;width:349px;height:1px;background:#b9b9b9;"></div>
<svg style="left:802px;top:276px" width="18" height="18" viewBox="0 0 18 18"><defs><linearGradient id="pg" x1="0" y1="0" x2="1" y2="1"><stop offset="0" stop-color="#8ccdea"/><stop offset=".5" stop-color="#4a9cc8"/><stop offset="1" stop-color="#1a6ea0"/></linearGradient></defs><path d="M4 -.2h11.900v17H4z" fill="url(#pg)"/><path d="M2.200 4.600h8.200v3.600H2.200z" fill="#3a8fc0"/><circle cx="2.200" cy="6.400" r="2.500" fill="#3a8fc0"/><circle cx="2.100" cy="6.400" r="1" fill="#bfe6f7"/><path d="M4.600 5.700h5M8.600 10.200h5M8.600 12.400h5M6.600 2.600l1-1.200" stroke="#d4edf9" stroke-width=".9"/></svg>
<div class="t ui" style="top:278px;font-size:14.25px;left:827.69px;color:#1a1a1a;">CIS: CAV Report Opt...</div>
<svg style="left:990px;top:274px" width="140" height="22" viewBox="0 0 140 22"><path d="M5 11.3h14" stroke="#1a1a1a" stroke-width="1.2"/><rect x="63.2" y="4.6" width="12.6" height="12.6" rx="1.2" fill="none" stroke="#1a1a1a" stroke-width="1.2"/><path d="M120.5 4.5l13 13M133.5 4.5l-13 13" stroke="#1a1a1a" stroke-width="1.25"/></svg>
<svg style="left:819px;top:310px" width="18" height="22" viewBox="0 0 18 22"><rect x="2.3" y="8.6" width="13.4" height="11.2" rx="1.8" fill="none" stroke="#555" stroke-width="1.25"/><path d="M5.5 8.4V6a3.5 3.5 0 0 1 7 0v2.4" fill="none" stroke="#555" stroke-width="1.25"/><circle cx="9" cy="14.2" r="1.15" fill="#555"/></svg>
<div class="t ui" style="top:313px;font-size:17.62px;left:857.12px;color:#666;"><span style="color:#6b6b6b">https://</span><span style="color:#151515">sso.fema.net</span><span style="color:#6b6b6b">/cis/getc...</span></div>
<svg style="left:1106px;top:310px" width="24" height="22" viewBox="0 0 24 22"><path d="M2.5 18.5L8.2 4.2h.6l5.7 14.3M4.6 13.6h7.8" fill="none" stroke="#6e6e6e" stroke-width="1.35"/><path d="M14.200 4.400a6.600 6.600 0 0 1 3.400 7.800M16.600 1.800a10.400 10.400 0 0 1 4.600 10.400" fill="none" stroke="#6e6e6e" stroke-width="1.200" stroke-linecap="round"/></svg>
<div class="abs" style="left:796px;top:340px;width:330px;height:563px;overflow:hidden;background:#fff">
<div class="t" style="top:3px;font-size:30.1px;left:19.89px;color:#000;font-weight:bold;">CAV Report Options</div>
<div class="abs" style="left:16px;top:63px;width:297px;height:640px;border:1.3px solid #000"></div>
<div class="t" style="top:70px;font-size:23.75px;left:20.61px;color:#000;font-weight:bold;">Include:</div>
<div class="abs cb" style="left:25.3px;top:104.2px"><svg width="15.6" height="15.6" viewBox="0 0 16 16" style="left:0;top:0"><path d="M3.6 8.3l3 3.1 5.9-6.9" fill="none" stroke="#fff" stroke-width="2.1"/></svg></div>
<div class="t" style="top:103px;font-size:20px;left:44.90px;color:#000;">CAV Info</div>
<div class="abs cb" style="left:25.3px;top:133.2px"><svg width="15.6" height="15.6" viewBox="0 0 16 16" style="left:0;top:0"><path d="M3.6 8.3l3 3.1 5.9-6.9" fill="none" stroke="#fff" stroke-width="2.1"/></svg></div>
<div class="t" style="top:132px;font-size:20px;left:44.90px;color:#000;">Findings: Serious/Minor/None</div>
<div class="abs cb" style="left:25.3px;top:163.2px"><svg width="15.6" height="15.6" viewBox="0 0 16 16" style="left:0;top:0"><path d="M3.6 8.3l3 3.1 5.9-6.9" fill="none" stroke="#fff" stroke-width="2.1"/></svg></div>
<div class="t" style="top:162px;font-size:20px;left:44.90px;color:#000;">Findings: Biennial Report</div>
<div class="t" style="top:185px;font-size:20px;left:20.60px;color:#000;">Issues</div>
<div class="abs cb" style="left:25.3px;top:216.2px"><svg width="15.6" height="15.6" viewBox="0 0 16 16" style="left:0;top:0"><path d="M3.6 8.3l3 3.1 5.9-6.9" fill="none" stroke="#fff" stroke-width="2.1"/></svg></div>
<div class="t" style="top:215px;font-size:20px;left:44.90px;color:#000;">Findings: Programmatic</div>
<div class="t" style="top:238px;font-size:20px;left:20.60px;color:#000;">Issues</div>
<div class="abs cb" style="left:25.3px;top:268.2px"><svg width="15.6" height="15.6" viewBox="0 0 16 16" style="left:0;top:0"><path d="M3.6 8.3l3 3.1 5.9-6.9" fill="none" stroke="#fff" stroke-width="2.1"/></svg></div>
<div class="t" style="top:267px;font-size:20px;left:44.90px;color:#000;">Findings: Potential Violations</div>
<div class="abs cb" style="left:25.3px;top:298.2px"><svg width="15.6" height="15.6" viewBox="0 0 16 16" style="left:0;top:0"><path d="M3.6 8.3l3 3.1 5.9-6.9" fill="none" stroke="#fff" stroke-width="2.1"/></svg></div>
<div class="t" style="top:297px;font-size:20px;left:44.90px;color:#000;">General Notes</div>
<div class="abs cb" style="left:25.3px;top:327.2px"><svg width="15.6" height="15.6" viewBox="0 0 16 16" style="left:0;top:0"><path d="M3.6 8.3l3 3.1 5.9-6.9" fill="none" stroke="#fff" stroke-width="2.1"/></svg></div>
<div class="t" style="top:326px;font-size:20px;left:44.90px;color:#000;">Background Notes</div>
<div class="abs cb" style="left:25.3px;top:357.2px"><svg width="15.6" height="15.6" viewBox="0 0 16 16" style="left:0;top:0"><path d="M3.6 8.3l3 3.1 5.9-6.9" fill="none" stroke="#fff" stroke-width="2.1"/></svg></div>
<div class="t" style="top:356px;font-size:20px;left:44.90px;color:#000;">Mitigation Grants Notes</div>
<div class="abs cb" style="left:25.3px;top:386.2px"><svg width="15.6" height="15.6" viewBox="0 0 16 16" style="left:0;top:0"><path d="M3.6 8.3l3 3.1 5.9-6.9" fill="none" stroke="#fff" stroke-width="2.1"/></svg></div>
<div class="t" style="top:385px;font-size:20px;left:44.90px;color:#000;">E.O. 11988 Notes</div>
<div class="abs cb" style="left:25.3px;top:416.2px"><svg width="15.6" height="15.6" viewBox="0 0 16 16" style="left:0;top:0"><path d="M3.6 8.3l3 3.1 5.9-6.9" fill="none" stroke="#fff" stroke-width="2.1"/></svg></div>
<div class="t" style="top:415px;font-size:20px;left:44.90px;color:#000;">Other Findings Notes</div>
<div class="abs cb" style="left:25.3px;top:445.2px"><svg width="15.6" height="15.6" viewBox="0 0 16 16" style="left:0;top:0"><path d="M3.6 8.3l3 3.1 5.9-6.9" fill="none" stroke="#fff" stroke-width="2.1"/></svg></div>
<div class="t" style="top:444px;font-size:20px;left:44.90px;color:#000;">Community Action Needed</div>
<div class="t" style="top:467px;font-size:20px;left:20.60px;color:#000;">Notes</div>
<div class="abs cb" style="left:25.3px;top:498.2px"><svg width="15.6" height="15.6" viewBox="0 0 16 16" style="left:0;top:0"><path d="M3.6 8.3l3 3.1 5.9-6.9" fill="none" stroke="#fff" stroke-width="2.1"/></svg></div>
<div class="t" style="top:497px;font-size:20px;left:44.90px;color:#000;">Initial Follow-up</div>
<div class="abs cb" style="left:25.3px;top:527.2px"><svg width="15.6" height="15.6" viewBox="0 0 16 16" style="left:0;top:0"><path d="M3.6 8.3l3 3.1 5.9-6.9" fill="none" stroke="#fff" stroke-width="2.1"/></svg></div>
<div class="t" style="top:526px;font-size:20px;left:44.90px;color:#000;">Compliance Follow-up</div>
<div class="abs cb" style="left:25.3px;top:557.2px"><svg width="15.6" height="15.6" viewBox="0 0 16 16" style="left:0;top:0"><path d="M3.6 8.3l3 3.1 5.9-6.9" fill="none" stroke="#fff" stroke-width="2.1"/></svg></div>
<div class="t" style="top:556px;font-size:20px;left:44.90px;color:#000;">Contacts</div>
</div>
<div class="abs" style="left:1125px;top:340px;width:20px;height:563px;background:#f1f1f1;"></div>
<div class="abs" style="left:1127.3px;top:362px;width:16.1px;height:460px;background:#c1c1c1;"></div>
<svg style="left:1126px;top:340px" width="19" height="563" viewBox="0 0 19 563"><path d="M5.2 15.5L9.5 10.5L13.8 15.5z" fill="#a3a3a3"/><path d="M5.2 549.5L9.5 554.5L13.8 549.5z" fill="#505050"/></svg>


<!-- ================= TASKBAR ================= -->
<div id="taskbar" class="abs"></div>
<div id="tsearch" class="abs"></div>
<svg style="left:20px;top:1044.5px" width="20" height="21" viewBox="0 0 20 21"><path d="M0 3.1L8.6 1.9V10H0zM9.8 1.7L20 0.2V10H9.8zM0 11.1h8.6v8.1L0 18zM9.8 11.1H20v9.7L9.8 19.4z" fill="#fff"/></svg>
<svg style="left:74px;top:1044px" width="24" height="22" viewBox="0 0 24 22"><circle cx="14.8" cy="8.5" r="6.1" fill="none" stroke="#222" stroke-width="1.5"/><path d="M10.4 12.9L1.8 20.4" stroke="#222" stroke-width="1.6"/></svg>
<div class="t ui" style="top:1047px;font-size:18.44px;left:110.38px;color:#2d2d2d;">Type here to search</div>
<svg style="left:509px;top:1044px" width="23" height="21" viewBox="0 0 23 21"><path d="M1.500 1V4.300H13.500V1M1.500 20V16.700H13.500V20" fill="none" stroke="#fff" stroke-width="1.100"/><rect x="1.500" y="6.700" width="12" height="8.200" fill="none" stroke="#fff" stroke-width="1.100"/><path d="M19.400 1V5.700M19.400 11V20" stroke="#fff" stroke-width="1.200"/><rect x="17.800" y="7" width="3.300" height="3.200" fill="#fff"/></svg>
<div class="abs" style="left:554px;top:1030px;width:56px;height:50px;background:#46585f;"></div>
<div class="abs" style="left:610px;top:1030px;width:5px;height:50px;background:#34464e;"></div>
<div class="abs" style="left:554px;top:1077px;width:61px;height:3px;background:#76b9ed;"></div>
<div class="abs" style="left:683px;top:1077px;width:51px;height:3px;background:#76b9ed;"></div>
<div class="abs" style="left:745px;top:1077px;width:51px;height:3px;background:#76b9ed;"></div>
<div class="abs" style="left:807px;top:1077px;width:51px;height:3px;background:#76b9ed;"></div>
<div class="abs" style="left:869px;top:1077px;width:51px;height:3px;background:#76b9ed;"></div>
<svg style="left:568px;top:1039px" width="31" height="31" viewBox="0 0 31 31"><defs><linearGradient id="eg1" x1="0" y1="0" x2="1" y2="0"><stop offset="0" stop-color="#2f9be0"/><stop offset=".55" stop-color="#35c1c4"/><stop offset="1" stop-color="#7ddc52"/></linearGradient><linearGradient id="eg2" x1="0" y1="0" x2="0" y2="1"><stop offset="0" stop-color="#1b86d8"/><stop offset="1" stop-color="#0c5fae"/></linearGradient></defs><circle cx="15.5" cy="15.5" r="15.3" fill="url(#eg2)"/><path d="M1 11.6C3.6 2.4 13-.6 20.4 1.6 27.6 3.8 31 10 30.6 14.4c-.4 4.6-4.6 6.4-8.400 6.200-3-.2-3.600-1.800-2.600-3.200 1.400-2 .2-6.600-4.800-6.800C9 10.400 3.600 12.400 1 11.600z" fill="url(#eg1)"/><path d="M13.600 12.200c-4.400.6-7 5.200-5 10.200 1.800 4.400 7 7.600 13.400 6.800 4-.6 6.600-2.600 8-4.800-4.600 2.600-9.400 2.200-12.600-.8-2.800-2.600-3.200-6.400-1-9.600-.8-.8-1.800-1.600-2.800-1.800z" fill="#1a5bb0" opacity=".85"/></svg>
<svg style="left:631px;top:1042px" width="29" height="24" viewBox="0 0 29 24"><path d="M1 3.200A2 2 0 0 1 3 1.200h8l2.600 2.600H26a2 2 0 0 1 2 2V7H1z" fill="#e8a92e"/><rect x="1" y="5.400" width="27" height="18" rx="1.600" fill="#fcd262"/><path d="M1 12h27v9.800a1.600 1.600 0 0 1-1.600 1.600H2.600A1.600 1.600 0 0 1 1 21.800z" fill="#f5bf3f"/><path d="M7.600 23.400v-7a1.200 1.200 0 0 1 1.200-1.200h11.400a1.200 1.200 0 0 1 1.200 1.200v7h-3.400v-4.400H11v4.400z" fill="#3d8fd6"/></svg>
<svg style="left:692px;top:1041px" width="30" height="28" viewBox="0 0 30 28"><rect x="9" y="1" width="20" height="22" rx="1.600" fill="#1490df"/><rect x="9" y="1" width="10" height="7.400" fill="#0f6cbd"/><rect x="19" y="1" width="10" height="7.400" fill="#28a8ea"/><rect x="9" y="8.400" width="10" height="7.400" fill="#1883d1"/><rect x="19" y="8.400" width="10" height="7.400" fill="#50d0f5"/><path d="M9 15.800l20-2v11.600a1.600 1.600 0 0 1-1.600 1.600H10.600A1.600 1.600 0 0 1 9 25.400z" fill="#1a78c8"/><path d="M9 16l20 11H10.600A1.600 1.600 0 0 1 9 25.400z" fill="#28a0e6"/><rect x="0" y="7" width="15.600" height="15.600" rx="1.400" fill="#0f64b4"/><text x="7.800" y="19.600" font-family="Liberation Sans,sans-serif" font-weight="bold" font-size="12.500" fill="#fff" text-anchor="middle">o</text></svg>
<svg style="left:754px;top:1041px" width="32" height="30" viewBox="0 0 32 30"><circle cx="18" cy="6.200" r="5" fill="#5b5fc7"/><circle cx="27" cy="8.600" r="3.400" fill="#5b5fc7"/><path d="M12 12.600h12.600v9.600a6.300 6.300 0 0 1-12.600 0z" fill="#7b83eb"/><path d="M23 12.600h7.600v6.800a4.200 4.200 0 0 1-7.600 2.400z" fill="#5b5fc7"/><rect x="0" y="7" width="15.400" height="15.400" rx="1.400" fill="#4b53bc"/><text x="7.700" y="19.200" font-family="Liberation Sans,sans-serif" font-weight="bold" font-size="11.500" fill="#fff" text-anchor="middle">T</text><circle cx="25.200" cy="24.200" r="5.600" fill="#fff"/><circle cx="25.200" cy="24.200" r="4.700" fill="#6bb700"/><path d="M22.800 24.400l1.800 1.800 3.200-3.600" fill="none" stroke="#fff" stroke-width="1.400"/></svg>
<svg style="left:816px;top:1041px" width="31" height="28" viewBox="0 0 31 28"><rect x="9" y="1" width="21" height="26" rx="1.600" fill="#2b7cd3"/><rect x="9" y="1" width="21" height="6.500" fill="#41a5ee"/><rect x="9" y="7.500" width="21" height="6.500" fill="#2b7cd3"/><rect x="9" y="14" width="21" height="6.500" fill="#185abd"/><path d="M9 20.500h21v4.900a1.600 1.600 0 0 1-1.600 1.600H10.600A1.600 1.600 0 0 1 9 25.400z" fill="#103f91"/><rect x="0" y="6.400" width="15.600" height="15.600" rx="1.400" fill="#185abd"/><text x="7.800" y="18.600" font-family="Liberation Sans,sans-serif" font-weight="bold" font-size="11" fill="#fff" text-anchor="middle">W</text></svg>
<svg style="left:880px;top:1040.5px" width="28" height="27" viewBox="0 0 28 27"><rect width="28" height="27" rx="3.600" fill="#b30b00"/><path d="M6.200 19.600c1.800-2.800 6-4 9.600-4.400 2.600-.3 6 .2 6.200 1.400.2 1.400-3.600.4-6.400-2.400-2.400-2.400-3.600-6.600-2.800-8.400.6-1.200 1.800-.6 1.600 1.800-.3 3.400-2.400 8-4.600 10.800-1.600 2-3.400 2.600-3.600 1.200z" fill="none" stroke="#fff" stroke-width="1.500" stroke-linejoin="round"/></svg>
<svg style="left:1416px;top:1050px" width="18" height="11" viewBox="0 0 18 11"><path d="M1 10l8-8.400 8 8.400" fill="none" stroke="#fff" stroke-width="1.400"/></svg>
<svg style="left:1444px;top:1045px" width="22" height="21" viewBox="0 0 22 21"><path d="M10 .6C7.600 2.400 4.400 3.200 1 3.200c0 7.600 2.400 13 9 16.200 6.600-3.200 9-8.600 9-16.200-3.400 0-6.600-.8-9-2.600z" fill="#fff"/><path d="M10 .6v18.800M1.200 9.400h17.600" stroke="#0a0e14" stroke-width="1.500"/><circle cx="16" cy="15.400" r="4.800" fill="#1aa260"/><path d="M13.800 15.400l1.600 1.700 2.800-3.200" fill="none" stroke="#fff" stroke-width="1.200"/></svg>
<svg style="left:1477px;top:1045px" width="16" height="20" viewBox="0 0 16 20"><ellipse cx="8" cy="10" rx="7.700" ry="9.900" fill="#0a84e4"/><path d="M4.600 6.400l6.600 6.600L8 16.200V3.800l3.200 3.200-6.600 6.600" fill="none" stroke="#fff" stroke-width="1.300" stroke-linejoin="round"/></svg>
<svg style="left:1505px;top:1045px" width="22" height="21" viewBox="0 0 22 21"><circle cx="12.400" cy="4.400" r="3.400" fill="#5b5fc7"/><circle cx="18.600" cy="6" r="2.400" fill="#5b5fc7"/><path d="M8.400 8.800H17v6.400a4.300 4.300 0 0 1-8.600 0z" fill="#7b83eb"/><path d="M16 8.800h5.200v4.600a2.900 2.900 0 0 1-5.200 1.600z" fill="#5b5fc7"/><rect x="0" y="4.800" width="10.600" height="10.600" rx="1" fill="#4b53bc"/><text x="5.300" y="13.400" font-family="Liberation Sans,sans-serif" font-weight="bold" font-size="8.500" fill="#fff" text-anchor="middle">T</text><circle cx="16.600" cy="16" r="4.400" fill="#fff"/><circle cx="16.600" cy="16" r="3.700" fill="#6bb700"/><path d="M14.800 16.100l1.300 1.300 2.300-2.600" fill="none" stroke="#fff" stroke-width="1.100"/></svg>
<svg style="left:1536px;top:1047px" width="18" height="17" viewBox="0 0 20 19"><rect x="6" y="0.600" width="13.600" height="15" rx="1" fill="#1490df"/><rect x="12.800" y="0.600" width="6.800" height="5" fill="#28a8ea"/><rect x="12.800" y="5.600" width="6.800" height="5" fill="#50d0f5"/><path d="M6 10.600l13.600-1.400v8a1 1 0 0 1-1 1H7a1 1 0 0 1-1-1z" fill="#1a78c8"/><path d="M6 10.800l13.600 7.400H7a1 1 0 0 1-1-1z" fill="#28a0e6"/><rect x="0" y="4.600" width="10.600" height="10.600" rx="1" fill="#0f64b4"/><text x="5.300" y="13.200" font-family="Liberation Sans,sans-serif" font-weight="bold" font-size="8.500" fill="#fff" text-anchor="middle">o</text></svg>
<svg style="left:1564px;top:1047px" width="23" height="19" viewBox="0 0 23 19"><path d="M5.400 13.600a4.400 4.400 0 0 1-.6-8.700 6.200 6.200 0 0 1 11.400-1.300 4.800 4.800 0 0 1 2.400 9.200c-.6.500-1.400.8-2.400.8z" fill="#1485e0"/><path d="M9 5.600a6 6 0 0 1 7.200-2 4.800 4.800 0 0 1 2.400 9.200L9 5.600z" fill="#2aa3f0"/><circle cx="16.400" cy="13" r="5.600" fill="#fff"/><circle cx="16.400" cy="13" r="4.700" fill="#1580dc"/><path d="M13.800 12.400a2.800 2.800 0 0 1 5-1.200M19 13.600a2.800 2.800 0 0 1-5 1.200" fill="none" stroke="#fff" stroke-width="1.100"/><path d="M19.300 9.600v2h-2M13.500 16.400v-2h2" fill="none" stroke="#fff" stroke-width="1"/></svg>
<svg style="left:1595px;top:1045px" width="21" height="21" viewBox="0 0 21 21"><defs><radialGradient id="gl" cx=".4" cy=".35" r=".7"><stop offset="0" stop-color="#e8e8e8"/><stop offset="1" stop-color="#8c8c8c"/></radialGradient></defs><circle cx="10" cy="10.400" r="9.600" fill="url(#gl)"/><path d="M6 4.400c2-1.600 5-1.200 6 .6s-1 3.600-3 4.600-4.400.6-4.600-1.400.400-2.800 1.600-3.800zM7.400 12.600c1.600-.6 3.400.4 3.400 2.200s-1.400 3.600-2.600 3.400-1.800-1.600-1.900-2.900.1-2.300 1.100-2.700z" fill="#5a9e46"/><rect x="11.600" y="11.600" width="8.400" height="8" rx="1" fill="#e7b12c"/><path d="M13.400 11.600V9.400a2.400 2.400 0 0 1 4.800 0v2.200" fill="none" stroke="#c9c9c9" stroke-width="1.500"/></svg>
<svg style="left:1628px;top:1045px" width="17" height="23" viewBox="0 0 17 23"><rect x="4" y="1" width="7.400" height="5.600" fill="none" stroke="#fff" stroke-width="1.200"/><path d="M6.200 3v1.600M9.200 3v1.600" stroke="#fff" stroke-width="1"/><rect x="2.200" y="6.600" width="11" height="14.400" rx="1.400" fill="none" stroke="#fff" stroke-width="1.300"/><path d="M9.600 17.800l2.400 2.400 4-4.600" fill="none" stroke="#cfd6dc" stroke-width="1.200"/></svg>
<svg style="left:1655px;top:1045px" width="20" height="20" viewBox="0 0 20 20"><rect width="20" height="20" fill="#9c9c9c"/><rect x="3" y="0" width="14" height="5" fill="#bdbdbd"/><rect x="0" y="17.500" width="20" height="2.500" fill="#8a1c1c"/><rect x="1" y="8" width="3" height="11" fill="#5a5a5a"/><rect x="16" y="8" width="3" height="11" fill="#5a5a5a"/><circle cx="10" cy="10" r="4.600" fill="#2f6fd8"/><circle cx="9" cy="8.600" r="2.200" fill="#eef4ff"/><path d="M6 16h8v2.500H6z" fill="#2b2b2b"/></svg>
<svg style="left:1685px;top:1050px" width="21" height="12" viewBox="0 0 21 12"><rect x=".8" y=".8" width="17.400" height="10" rx="1" fill="none" stroke="#fff" stroke-width="1.300"/><rect x="2.600" y="2.600" width="6.600" height="6.400" fill="#fff"/><rect x="18.600" y="3.600" width="1.800" height="4.400" fill="#fff"/></svg>
<svg style="left:1715px;top:1046px" width="21" height="18.3" viewBox="0 0 23 20"><rect x="3.800" y="1.800" width="18" height="12.600" fill="none" stroke="#fff" stroke-width="1.300"/><path d="M12.800 14.400v3.400M8 18h9.600" stroke="#fff" stroke-width="1.300"/><rect x=".8" y=".8" width="5" height="6.400" fill="#1c2a38" stroke="#fff" stroke-width="1.100"/><path d="M2.400 2.200v1.600M4.200 2.200v1.600" stroke="#fff" stroke-width=".8"/></svg>
<svg style="left:1744px;top:1045px" width="23" height="20" viewBox="0 0 23 20"><path d="M1 7h3.600l4.600-4.400v14.800L4.600 13H1z" fill="none" stroke="#fff" stroke-width="1.300" stroke-linejoin="round"/><path d="M12.400 6.800a4.600 4.600 0 0 1 0 6.400M15.400 4.400a8.400 8.400 0 0 1 0 11.200M18.400 2a12 12 0 0 1 0 16" fill="none" stroke="#fff" stroke-width="1.300" stroke-linecap="round"/></svg>
<div class="t ui" style="top:1038px;font-size:13.96px;left:1311.70px;width:1000px;text-align:center;color:#fff;">5:25 PM</div>
<div class="t ui" style="top:1059px;font-size:15.29px;left:1311.70px;width:1000px;text-align:center;color:#fff;">8/16/2022</div>
<svg style="left:1869px;top:1045px" width="21" height="18" viewBox="0 0 21 18"><path d="M.6.600h19.800v13.200H10l-3.800 3.400v-3.400H.6z" fill="#fff"/><path d="M4 4.400h13M4 7.400h13M4 10.400h13" stroke="#1c2a38" stroke-width="1.100"/></svg>
<svg style="left:1876px;top:1051.5px" width="26" height="26" viewBox="0 0 26 26"><circle cx="13" cy="13" r="12.300" fill="#3a3f45" stroke="#6d7278" stroke-width="1.200"/><text x="13" y="18.600" font-family="Liberation Sans,sans-serif" font-weight="bold" font-size="15" fill="#fff" text-anchor="middle">33</text></svg>
<div class="abs" style="left:1914px;top:1030px;width:1px;height:50px;background:#58626b;"></div>

</div>
</body>
</html>
